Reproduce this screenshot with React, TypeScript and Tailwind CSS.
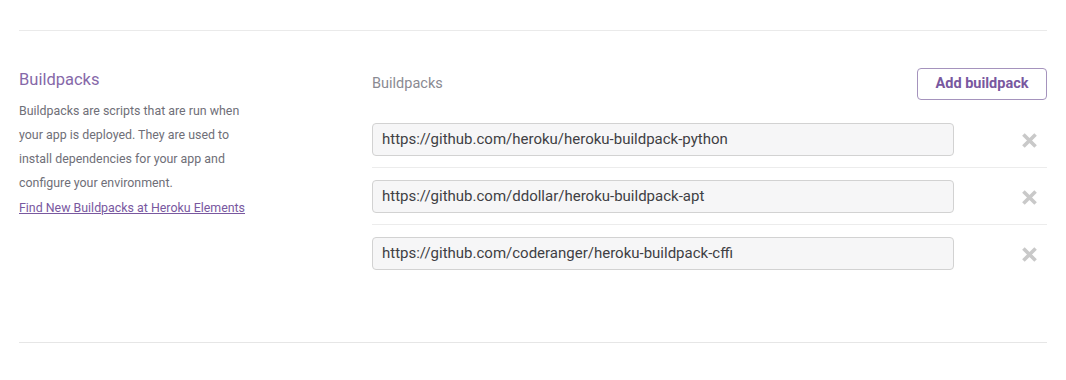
import React from "react";

const buildpacks = [
  "https://github.com/heroku/heroku-buildpack-python",
  "https://github.com/ddollar/heroku-buildpack-apt",
  "https://github.com/coderanger/heroku-buildpack-cffi",
];

const RemoveIcon: React.FC = () => (
  <svg width="15" height="15" viewBox="0 0 15 15" className="mt-[2px]" aria-hidden="true">
    <path d="M2.7 2.7 L12.3 12.3 M12.3 2.7 L2.7 12.3" stroke="#c9c9c9" strokeWidth="3.6" strokeLinecap="square" />
  </svg>
);

const App: React.FC = () => {
  return (
    <div className="w-[1066px] h-[380px] bg-white px-[19px] pt-[30px] font-['Roboto',sans-serif]">
      <div className="border-t border-[#eaeaea] w-[1028px]" />
      <div className="flex pt-[37px] pb-[61px] border-b border-[#e6e6e6] w-[1028px]">
        <div className="w-[353px] shrink-0">
          <h3 className="text-[16.5px] leading-6 text-[#79589f] opacity-90">Buildpacks</h3>
          <p className="mt-[7px] w-[234px] text-[12.4px] leading-6 text-[#6f6f78]">
            Buildpacks are scripts that are run when your app is deployed. They are used to install dependencies for your app and configure your environment.
          </p>
          <a href="#" className="text-[12.4px] leading-6 text-[#79589f] underline">
            Find New Buildpacks at Heroku Elements
          </a>
        </div>
        <div className="flex-1">
          <div className="flex items-center justify-between h-8">
            <span className="text-[14.5px] text-[#8a8a92]">Buildpacks</span>
            <button className="h-8 w-[130px] rounded-[4px] border border-[#a593bd] bg-white text-[14.5px] font-bold text-[#79589f]">
              Add buildpack
            </button>
          </div>
          <div className="mt-[11px]">
            {buildpacks.map((url, i) => (
              <div
                key={url}
                className={`flex items-center pt-3 pb-[11px] ${i < buildpacks.length - 1 ? "border-b border-[#ececec]" : ""}`}
              >
                <div className="w-[582px] h-[33px] rounded-[4px] border border-[#d2d2d2] bg-[#f6f6f7] flex items-center px-[9px] text-[15px] text-[#3f3f44]">
                  {url}
                </div>
                <div className="flex-1 flex justify-end pr-[10px]">
                  <RemoveIcon />
                </div>
              </div>
            ))}
          </div>
        </div>
      </div>
    </div>
  );
};

export default App;
